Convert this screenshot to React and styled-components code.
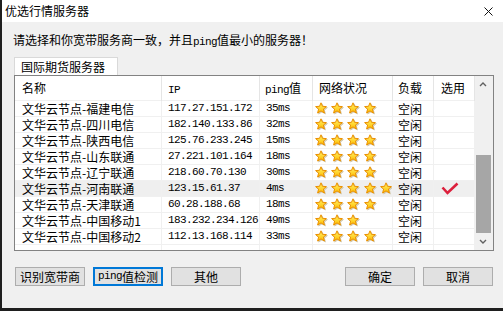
import React from "react"
import styled, { createGlobalStyle } from "styled-components"

const GlobalStyle = createGlobalStyle`
  html, body {
    margin: 0;
    padding: 0;
    background: #f0f0f0;
  }
  body {
    font-family: "Noto Sans CJK SC", "Noto Sans", sans-serif;
    font-size: 12px;
    color: #000;
  }
`

const servers = [
  { name: "文华云节点-福建电信", ip: "117.27.151.172", ping: "35ms", stars: 4 },
  { name: "文华云节点-四川电信", ip: "182.140.133.86", ping: "32ms", stars: 4 },
  { name: "文华云节点-陕西电信", ip: "125.76.233.245", ping: "15ms", stars: 4 },
  { name: "文华云节点-山东联通", ip: "27.221.101.164", ping: "18ms", stars: 4 },
  { name: "文华云节点-辽宁联通", ip: "218.60.70.130", ping: "30ms", stars: 4 },
  { name: "文华云节点-河南联通", ip: "123.15.61.37", ping: "4ms", stars: 5, picked: true },
  { name: "文华云节点-天津联通", ip: "60.28.188.68", ping: "18ms", stars: 4 },
  { name: "文华云节点-中国移动1", ip: "183.232.234.126", ping: "49ms", stars: 3 },
  { name: "文华云节点-中国移动2", ip: "112.13.168.114", ping: "33ms", stars: 4 },
]

const Window = styled.div`
  width: 503px;
  height: 311px;
  box-sizing: border-box;
  border-left: 2px solid #1f1f1f;
  border-bottom: 3px solid #1f1f1f;
  display: flex;
  flex-direction: column;
  overflow: hidden;
`

const TitleBar = styled.div`
  height: 22px;
  flex: 0 0 22px;
  background: #fff;
  display: flex;
  align-items: center;
  justify-content: space-between;
  padding: 0 10px 0 3px;
  line-height: 16px;
  font-size: 12px;
`

const Body = styled.div`
  flex: 1;
  background: #f0f0f0;
  padding: 10px 9px 0 12px;
  display: flex;
  flex-direction: column;
`

const Mono = styled.span`
  font-family: "Liberation Mono", monospace;
  font-size: 11px;
  letter-spacing: -0.6px;
`

const Hint = styled.div`
  line-height: 16px;
  margin-left: -1px;
`

const TabStrip = styled.div`
  display: flex;
  margin-top: 7px;
`

const Tab = styled.div`
  width: 104px;
  height: 18px;
  box-sizing: border-box;
  border: 1px solid #d9d9d9;
  border-bottom: none;
  background: #fff;
  padding-left: 6px;
  line-height: 17px;
`

const ListBox = styled.div`
  height: 176px;
  box-sizing: border-box;
  border: 1px solid #828282;
  background: #fff;
  display: grid;
  grid-template-columns: 1fr 18px;
  overflow: hidden;
`

const Table = styled.div`
  overflow: hidden;
`

const cols = "147px 98px 53px 80px 41px 41px"

const HeaderRow = styled.div`
  display: grid;
  grid-template-columns: ${cols};
  height: 24px;
`

const HeaderCell = styled.div`
  border-right: 1px solid #e5e5e5;
  padding-left: ${p => p.$pad ?? 6}px;
  line-height: 24px;
  white-space: nowrap;
`

const Row = styled.div`
  display: grid;
  grid-template-columns: ${cols};
  height: 16px;
  box-sizing: border-box;
  border-top: 1px solid #f0f0f0;
  background: ${p => (p.$selected ? "#efefef" : "transparent")};
`

const Cell = styled.div`
  border-right: 1px solid #f0f0f0;
  padding-left: ${p => p.$pad ?? 6}px;
  line-height: 15px;
  white-space: nowrap;
  overflow: hidden;
  display: flex;
  align-items: ${p => (p.$top ? "flex-start" : "center")};
`

const Stars = styled.div`
  display: flex;
  gap: 3.2px;
  padding-top: 1px;
`

const ScrollBar = styled.div`
  background: #f0f0f0;
  display: flex;
  flex-direction: column;
`

const ArrowBtn = styled.div`
  height: 17px;
  flex: 0 0 17px;
  display: flex;
  align-items: center;
  justify-content: center;
  padding-right: 2px;
`

const Track = styled.div`
  flex: 1;
  display: flex;
  flex-direction: column;
  padding: 0 2px 0 1px;
`

const Thumb = styled.div`
  margin-top: ${p => p.$offset}px;
  height: ${p => p.$size}px;
  background: #a6a6a6;
`

const ButtonBar = styled.div`
  display: flex;
  justify-content: space-between;
  margin: 16px 1px 0 1px;
`

const ButtonGroup = styled.div`
  display: flex;
  gap: 8px;
`

const Button = styled.button`
  width: 70px;
  height: 19px;
  box-sizing: border-box;
  border: ${p => (p.$focused ? "2px solid #0078d7" : "1px solid #adadad")};
  background: #e1e1e1;
  font-family: "Noto Sans CJK SC", sans-serif;
  font-size: 12px;
  line-height: 15px;
  padding: 0;
  color: #000;
  display: flex;
  align-items: center;
  justify-content: center;
`

function Star() {
  const d =
    "M6 0.8 L7.5 4.3 L11.4 4.6 L8.4 7.1 L9.4 11 L6 8.9 L2.6 11 L3.6 7.1 L0.6 4.6 L4.5 4.3 Z"
  return (
    <svg width="13" height="13" viewBox="0 0 13 13">
      <defs>
        <linearGradient id="starFill" x1="0" y1="0" x2="0" y2="1">
          <stop offset="0" stopColor="#fff36a" />
          <stop offset="1" stopColor="#ffbc00" />
        </linearGradient>
      </defs>
      <path d={d} transform="translate(1 1)" fill="#d6ccb2" stroke="#d6ccb2" strokeLinejoin="round" />
      <path d={d} fill="url(#starFill)" stroke="#eb9000" strokeWidth="1" strokeLinejoin="round" />
    </svg>
  )
}

function Check() {
  return (
    <svg width="18" height="13" viewBox="0 0 18 13">
      <path d="M1.5 5.5 L6.5 11 L16.5 1.5" fill="none" stroke="#dc1f3c" strokeWidth="2.6" />
    </svg>
  )
}

function Chevron({ down }) {
  return (
    <svg width="8" height="5" viewBox="0 0 8 5">
      <polyline
        points={down ? "1,1 4,4 7,1" : "1,4 4,1 7,4"}
        fill="none"
        stroke="#606060"
        strokeWidth="1.4"
      />
    </svg>
  )
}

function ServerRow({ server }) {
  return (
    <Row $selected={server.picked}>
      <Cell $pad={7}>{server.name}</Cell>
      <Cell>
        <Mono>{server.ip}</Mono>
      </Cell>
      <Cell>
        <Mono>{server.ping}</Mono>
      </Cell>
      <Cell $pad={2} $top>
        <Stars>
          {Array.from({ length: server.stars }, (_, i) => (
            <Star key={i} />
          ))}
        </Stars>
      </Cell>
      <Cell $pad={5}>空闲</Cell>
      <Cell $pad={7}>{server.picked ? <Check /> : null}</Cell>
    </Row>
  )
}

export default function App() {
  return (
    <>
      <GlobalStyle />
      <Window>
        <TitleBar>
          <span>优选行情服务器</span>
          <svg width="9" height="9" viewBox="0 0 9 9">
            <path d="M0.5 0.5 L8.5 8.5 M8.5 0.5 L0.5 8.5" stroke="#111" strokeWidth="1" />
          </svg>
        </TitleBar>
        <Body>
          <Hint>
            请选择和你宽带服务商一致，并且<Mono>ping</Mono>值最小的服务器！
          </Hint>
          <TabStrip>
            <Tab>国际期货服务器</Tab>
          </TabStrip>
          <ListBox>
            <Table>
              <HeaderRow>
                <HeaderCell $pad={7}>名称</HeaderCell>
                <HeaderCell>
                  <Mono>IP</Mono>
                </HeaderCell>
                <HeaderCell $pad={5}>
                  <Mono>ping</Mono>值
                </HeaderCell>
                <HeaderCell>网络状况</HeaderCell>
                <HeaderCell $pad={5}>负载</HeaderCell>
                <HeaderCell $pad={7}>选用</HeaderCell>
              </HeaderRow>
              {servers.map(s => (
                <ServerRow key={s.ip} server={s} />
              ))}
              <Row>
                <Cell />
                <Cell />
                <Cell />
                <Cell />
                <Cell />
                <Cell />
              </Row>
            </Table>
            <ScrollBar>
              <ArrowBtn>
                <Chevron />
              </ArrowBtn>
              <Track>
                <Thumb $offset={62} $size={78} />
              </Track>
              <ArrowBtn>
                <Chevron down />
              </ArrowBtn>
            </ScrollBar>
          </ListBox>
          <ButtonBar>
            <ButtonGroup>
              <Button>识别宽带商</Button>
              <Button $focused>
                <Mono>ping</Mono>值检测
              </Button>
              <Button>其他</Button>
            </ButtonGroup>
            <ButtonGroup>
              <Button>确定</Button>
              <Button>取消</Button>
            </ButtonGroup>
          </ButtonBar>
        </Body>
      </Window>
    </>
  )
}
